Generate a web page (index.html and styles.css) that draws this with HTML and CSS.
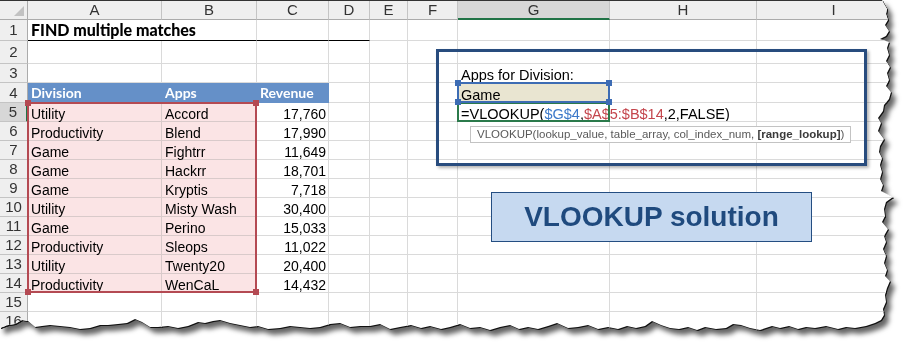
FILE: index.html
```html
<html>

<head>
	<meta charset="utf-8">
	<title>FIND multiple matches - VLOOKUP</title>
	<link rel="stylesheet" href="styles.css">
</head>

<body>
	<div class="page">
		<div class="paper">
			<div class="sheet">
				<div class="corner"></div><div class="ch">A</div><div class="ch">B</div><div class="ch">C</div><div class="ch">D</div><div class="ch">E</div><div class="ch">F</div><div class="ch on">G</div><div class="ch">H</div><div class="ch">I</div>

				<div class="rh">1</div><div class="ttl">FIND multiple matches</div><div class="uline"></div><div class="uline"></div><div class="uline"></div><div></div><div></div><div></div><div></div><div></div>
				<div class="rh">2</div><div></div><div></div><div></div><div></div><div></div><div></div><div></div><div></div><div></div>
				<div class="rh">3</div><div></div><div></div><div></div><div></div><div></div><div></div><div class="big">Apps for Division:</div><div></div><div></div>
				<div class="rh">4</div><div class="hd">Division</div><div class="hd">Apps</div><div class="hd">Revenue</div><div></div><div></div><div></div><div class="big pick">Game</div><div></div><div></div>
				<div class="rh on">5</div><div class="pk">Utility</div><div class="pk">Accord</div><div class="num">17,760</div><div></div><div></div><div></div><div class="big edit">=VLOOKUP(<span class="ref1">$G$4</span>,<span class="ref2">$A$5:$B$14</span>,2,FALSE)</div><div></div><div></div>
				<div class="rh">6</div><div class="pk">Productivity</div><div class="pk">Blend</div><div class="num">17,990</div><div></div><div></div><div></div><div></div><div></div><div></div>
				<div class="rh">7</div><div class="pk">Game</div><div class="pk">Fightrr</div><div class="num">11,649</div><div></div><div></div><div></div><div></div><div></div><div></div>
				<div class="rh">8</div><div class="pk">Game</div><div class="pk">Hackrr</div><div class="num">18,701</div><div></div><div></div><div></div><div></div><div></div><div></div>
				<div class="rh">9</div><div class="pk">Game</div><div class="pk">Kryptis</div><div class="num">7,718</div><div></div><div></div><div></div><div></div><div></div><div></div>
				<div class="rh">10</div><div class="pk">Utility</div><div class="pk">Misty Wash</div><div class="num">30,400</div><div></div><div></div><div></div><div></div><div></div><div></div>
				<div class="rh">11</div><div class="pk">Game</div><div class="pk">Perino</div><div class="num">15,033</div><div></div><div></div><div></div><div></div><div></div><div></div>
				<div class="rh">12</div><div class="pk">Productivity</div><div class="pk">Sleops</div><div class="num">11,022</div><div></div><div></div><div></div><div></div><div></div><div></div>
				<div class="rh">13</div><div class="pk">Utility</div><div class="pk">Twenty20</div><div class="num">20,400</div><div></div><div></div><div></div><div></div><div></div><div></div>
				<div class="rh">14</div><div class="pk">Productivity</div><div class="pk">WenCaL</div><div class="num">14,432</div><div></div><div></div><div></div><div></div><div></div><div></div>
				<div class="rh">15</div><div></div><div></div><div></div><div></div><div></div><div></div><div></div><div></div><div></div>
				<div class="rh">16</div><div></div><div></div><div></div><div></div><div></div><div></div><div></div><div></div><div></div>
				<div class="rh">17</div><div></div><div></div><div></div><div></div><div></div><div></div><div></div><div></div><div></div>
			</div>

			<!-- range outlines drawn while the formula is being edited -->
			<div class="marks">
				<div class="rng rng-red"><i class="h tl"></i><i class="h tr"></i><i class="h bl"></i><i class="h br"></i></div>
				<div class="rng rng-blue"><i class="h tl"></i><i class="h tr"></i><i class="h bl"></i><i class="h br"></i></div>
				<div class="rng rng-green"></div>
			</div>

			<div class="callout"></div>
			<div class="tip">VLOOKUP(lookup_value, table_array, col_index_num, <b>[range_lookup]</b>)</div>
			<div class="note">VLOOKUP solution</div>
		</div>
	</div>
</body>

</html>
```

FILE: styles.css
```css
body {
	margin: 0;
	background: #fff;
}

/* torn paper edge: black rim + soft shadow follow the clipped shape */
.page {
	width: 911px;
	height: 352px;
	filter: drop-shadow(1px 1px 0 #111) drop-shadow(4px 5px 2.5px rgba(0, 0, 0, 0.6));
}

.paper {
	position: relative;
	height: 352px;
	box-sizing: border-box;
	border-top: 1px solid #333;
	background: #fff;
	overflow: hidden;
	clip-path: polygon(0 0, 882px 0, 884px 4px, 887px 9px, 886px 14px, 888px 20px, 885px 25px, 889px 31px, 886px 36px, 880px 39px, 889px 42px, 887px 48px, 889px 55px, 886px 61px, 890px 67px, 887px 73px, 889px 80px, 886px 86px, 891px 92px, 889px 99px, 884px 105px, 883px 111px, 878px 118px, 881px 123px, 878px 131px, 884px 139px, 880px 146px, 879px 152px, 882px 158px, 880px 165px, 882px 172px, 880px 179px, 883px 185px, 881px 191px, 893px 197px, 886px 202px, 884px 209px, 885px 216px, 882px 222px, 888px 229px, 884px 236px, 886px 242px, 883px 249px, 886px 256px, 884px 263px, 887px 270px, 885px 276px, 890px 281px, 887px 288px, 885px 295px, 886px 302px, 883px 309px, 884px 315px, 881px 320px,
		875px 323px, 866px 326px, 855px 328px, 846px 327px, 838px 329px, 826px 326px, 815px 328px, 806px 327px, 798px 329px, 789px 326px, 780px 328px, 772px 326px, 760px 330px, 750px 328px, 741px 325px, 733px 324px, 726px 328px, 716px 329px, 705px 327px, 697px 330px, 688px 327px, 679px 329px, 670px 328px, 661px 325px, 652px 321px, 645px 326px, 636px 328px, 627px 326px, 618px 329px, 608px 327px, 598px 329px, 588px 325px, 578px 327px, 568px 328px, 557px 323px, 548px 326px, 538px 329px, 528px 327px, 519px 329px, 510px 325px, 500px 327px, 490px 330px, 480px 327px, 470px 328px, 460px 324px, 450px 327px, 441px 329px, 430px 326px, 421px 328px, 411px 325px, 400px 327px, 390px 329px, 380px 324px, 370px 326px, 360px 326px, 350px 327px, 340px 323px, 330px 324px, 320px 327px, 310px 328px, 300px 327px, 290px 326px, 280px 328px, 268px 329px, 258px 326px, 250px 327px, 240px 325px, 230px 323px, 220px 320px, 213px 321px, 205px 323px, 198px 322px, 188px 326px, 178px 328px, 168px 326px, 158px 327px, 150px 327px, 142px 322px, 135px 319px, 127px 323px, 118px 324px, 108px 325px, 100px 325px, 90px 328px, 80px 329px, 70px 327px, 60px 326px, 50px 325px, 42px 326px, 35px 327px, 28px 321px, 22px 320px, 15px 324px, 8px 325px, 0 328px);
}

.sheet,
.marks {
	display: grid;
	grid-template-columns: 28px 134px 95px 72px 41px 38px 50px 152px 147px 1fr;
	grid-template-rows: 19px 21px 23px 19px 20px repeat(13, 19px);
}

.sheet {
	font: 14px "Liberation Sans", Arial, sans-serif;
	color: #000;
}

.sheet > div {
	display: flex;
	align-items: flex-end;
	box-sizing: border-box;
	min-width: 0;
	padding: 0 3px;
	line-height: 14px;
	white-space: nowrap;
	border-right: 1px solid #dadada;
	border-bottom: 1px solid #dadada;
}

/* headers */
.sheet > .corner,
.sheet > .ch,
.sheet > .rh {
	align-items: center;
	justify-content: center;
	padding: 0;
	font-size: 15px;
	background: #efefef;
	color: #333;
	border-right-color: #c4c4c4;
	border-bottom-color: #c4c4c4;
}

.sheet > .ch {
	border-bottom-color: #ababab;
}

.sheet > .rh {
	border-right-color: #ababab;
}

.sheet > .corner {
	align-items: flex-end;
	justify-content: flex-end;
	border-color: #ababab;
}

.corner::after {
	content: "";
	width: 0;
	height: 0;
	margin: 0 3px 3px 0;
	border-left: 10px solid transparent;
	border-bottom: 10px solid #c2c2c2;
}

.sheet > .ch.on {
	background: #d7d7d7;
	border-bottom: 2px solid #217346;
}

.sheet > .rh.on {
	background: #d7d7d7;
	border-right: 2px solid #217346;
}

/* cells */
.sheet > .ttl {
	font: 900 16px Lato, "Liberation Sans", sans-serif;
	padding-bottom: 1px;
	border-right: none;
	border-bottom: 1px solid #000;
}

.sheet > .uline {
	border-bottom: 1px solid #000;
}

.sheet > .hd {
	font: bold 14px Lato, "Liberation Sans", sans-serif;
	color: #fff;
	background: #6590c8;
	border-right-color: #6590c8;
	border-bottom-color: #6590c8;
	padding-bottom: 1px;
}

.sheet > .pk {
	background: #fbe4e5;
	border-right-color: #d9caca;
	border-bottom-color: #d9caca;
}

.sheet > .num {
	justify-content: flex-end;
	padding-right: 2px;
}

.sheet > .big {
	font-size: 14.5px;
}

.sheet > .pick {
	background: #e9e5d1;
}

.sheet > .edit {
	border-right: none;
}

.ref1 {
	color: #3b78c9;
}

.ref2 {
	color: #c4454c;
}

/* range outlines */
.marks {
	position: absolute;
	top: 0;
	left: 0;
	width: 911px;
	pointer-events: none;
}

.rng {
	position: relative;
	box-sizing: border-box;
	margin: -1px 0 0 -1px;
	border: 2px solid;
}

.rng-red {
	grid-row: 6 / 16;
	grid-column: 2 / 4;
	border-color: #b44a53;
	color: #b44a53;
}

.rng-blue {
	grid-row: 5 / 6;
	grid-column: 8 / 9;
	border-color: #3d6cb4;
	color: #3d6cb4;
	z-index: 1;
}

.rng-green {
	grid-row: 6 / 7;
	grid-column: 8 / 9;
	border-color: #2b7a4b;
}

.h {
	position: absolute;
	width: 6px;
	height: 6px;
	background: currentColor;
}

.h.tl { left: -4px; top: -4px; }
.h.tr { right: -4px; top: -4px; }
.h.bl { left: -4px; bottom: -4px; }
.h.br { right: -4px; bottom: -4px; }

/* floating shapes */
.callout {
	position: absolute;
	left: 436px;
	top: 48px;
	width: 431px;
	height: 117px;
	box-sizing: border-box;
	border: 3px solid #284c7e;
	box-shadow: 2px 2px 3px rgba(0, 0, 0, 0.3);
}

.tip {
	position: absolute;
	left: 470px;
	top: 125px;
	width: 381px;
	height: 17px;
	box-sizing: border-box;
	padding: 0 0 0 6px;
	background: #fff;
	border: 1px solid #c3c3c3;
	font: 11.5px "Liberation Sans", Arial, sans-serif;
	line-height: 15px;
	color: #5a5a5a;
	white-space: nowrap;
}

.tip b {
	color: #3a3a3a;
}

.note {
	position: absolute;
	left: 491px;
	top: 191px;
	width: 321px;
	height: 50px;
	box-sizing: border-box;
	display: flex;
	align-items: center;
	justify-content: center;
	background: #c6d9f0;
	border: 1px solid #244e82;
	font: bold 28px "Liberation Sans", Arial, sans-serif;
	color: #1f4a7e;
}
```
